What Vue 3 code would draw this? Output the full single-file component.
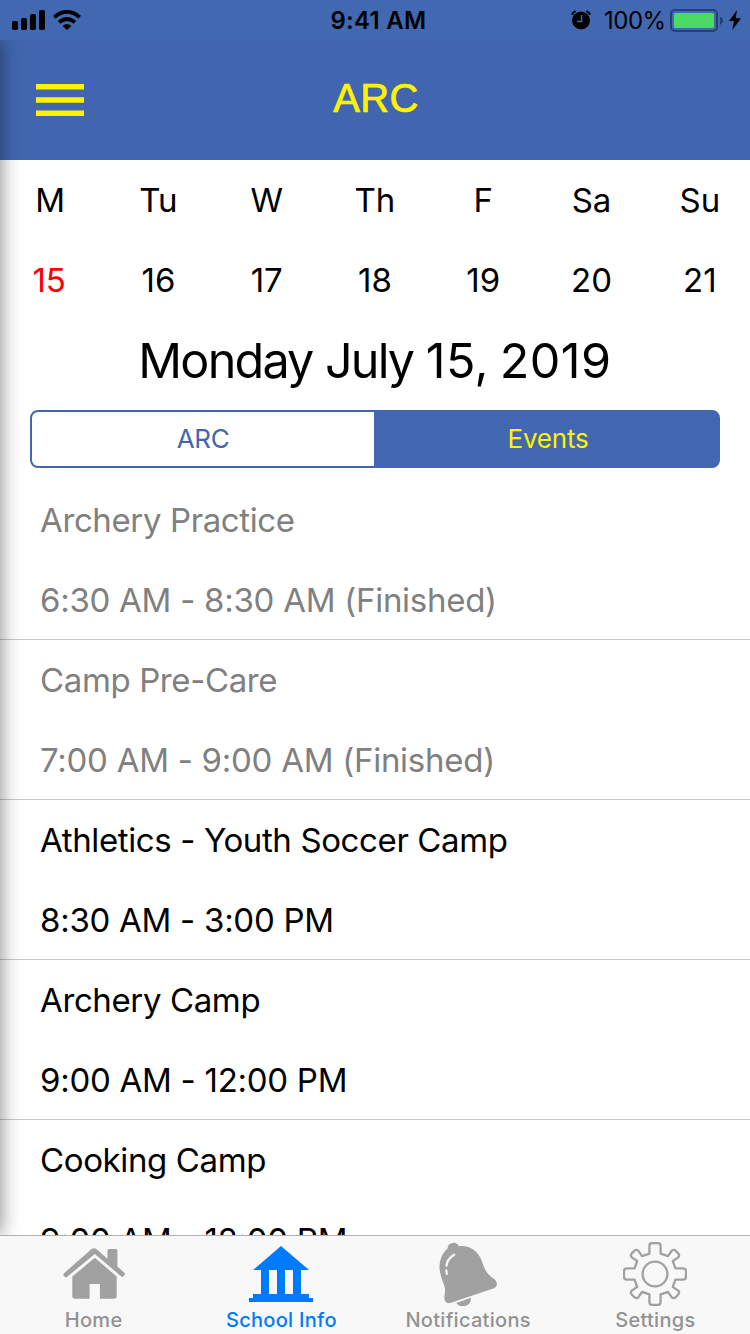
<script setup>
const days = [
  { name: 'M', date: '15', today: true },
  { name: 'Tu', date: '16' },
  { name: 'W', date: '17' },
  { name: 'Th', date: '18' },
  { name: 'F', date: '19' },
  { name: 'Sa', date: '20' },
  { name: 'Su', date: '21' },
]

const events = [
  { title: 'Archery Practice', time: '6:30 AM - 8:30 AM (Finished)', done: true },
  { title: 'Camp Pre-Care', time: '7:00 AM - 9:00 AM (Finished)', done: true },
  { title: 'Athletics - Youth Soccer Camp', time: '8:30 AM - 3:00 PM' },
  { title: 'Archery Camp', time: '9:00 AM - 12:00 PM' },
  { title: 'Cooking Camp', time: '9:00 AM - 12:00 PM' },
]
</script>

<template>
  <div class="screen">
    <header class="status">
      <div class="side">
        <svg class="signal" width="34" height="20" viewBox="0 0 34 20">
          <rect x="0" y="11" width="6" height="9" rx="1.8" />
          <rect x="9" y="8" width="6" height="12" rx="1.8" />
          <rect x="18" y="4" width="6" height="16" rx="1.8" />
          <rect x="27" y="0" width="6" height="20" rx="1.8" />
        </svg>
        <svg class="wifi" width="28" height="20" viewBox="0 0 28 20">
          <path d="M1.3 7.2Q14 -3.6 26.7 7.2M6 12.4Q14 5.6 22 12.4" fill="none" stroke="#000" stroke-width="3.8" />
          <path d="M9.6 16Q14 12 18.4 16L14 20Z" />
        </svg>
      </div>
      <div class="clock">9:41 AM</div>
      <div class="side right">
        <svg class="alarm" width="20" height="20" viewBox="0 0 20 20">
          <circle cx="10" cy="10.5" r="9" />
          <path d="M.8 4.6A10 10 0 0 1 4.6 1.1M15.4 1.1A10 10 0 0 1 19.2 4.6" fill="none" stroke="#000" stroke-width="2" />
          <path d="M10.6 5V11.4H6" fill="none" stroke="#4267b0" stroke-width="1.5" />
        </svg>
        <span class="percent">100%</span>
        <svg class="battery" width="53" height="24" viewBox="0 0 53 24">
          <rect x="1" y="1" width="46" height="21" rx="4" fill="none" stroke="#263f6e" stroke-width="2" />
          <rect x="4" y="4" width="40" height="15" rx="1.5" fill="#4cd964" />
          <path d="M50 8Q53 9 53 11.8T50 16Z" fill="#263f6e" />
        </svg>
        <svg class="bolt" width="12" height="20" viewBox="0 0 12 20">
          <path d="M8 0L0 11H5L3.3 20L12 8.3H6.7Z" />
        </svg>
      </div>
    </header>

    <main class="body">
      <nav class="navbar">
        <svg class="menu" width="48" height="32" viewBox="0 0 48 32">
          <path d="M0 0H48V5.5H0ZM0 13.3H48V18.7H0ZM0 26.5H48V32H0Z" fill="#fff200" />
        </svg>
        <h1>ARC</h1>
      </nav>

      <section class="week">
        <div v-for="d in days" :key="d.name" class="day" :class="{ today: d.today }">
          <span>{{ d.name }}</span>
          <span class="num">{{ d.date }}</span>
        </div>
      </section>

      <h2>Monday July <span class="digits">15, 2019</span></h2>

      <div class="segments">
        <button>ARC</button>
        <button class="on">Events</button>
      </div>

      <ul class="events">
        <li v-for="e in events" :key="e.title" :class="{ done: e.done }">
          <p>{{ e.title }}</p>
          <p class="time">{{ e.time }}</p>
        </li>
      </ul>
      <div class="edge"></div>
    </main>

    <footer class="tabs">
      <div class="tab">
        <svg width="64" height="64" viewBox="0 0 64 64" fill="#a1a1a1">
          <path d="M2.1 31.2L29.3 7.3Q32 5.3 34.7 7.3L45.4 16.8V8.6Q45.4 7 47 7H53.8Q55.4 7 55.4 8.6V24.6L62 30.5Q63.6 31.8 62.4 33.2L61.5 34.3Q60.4 35.5 59.1 34.3L32.8 12.1L4.9 35Q3.7 36 2.7 34.8L1.6 33.5Q.9 32.2 2.1 31.2Z" />
          <path d="M10.3 34.6L32.8 15.8L54.7 34.4V54Q54.7 56.8 52 56.8H37.9V42H27.6V56.8H13Q10.3 56.8 10.3 54Z" />
        </svg>
        <span>Home</span>
      </div>
      <div class="tab active">
        <svg width="64" height="64" viewBox="0 0 64 64" fill="#007aff">
          <path d="M32 4L60 28H52V52H60V56H64V60H0V56H4V52H12V28H4ZM20 28V52H28V28ZM36 28V52H44V28Z" fill-rule="evenodd" />
        </svg>
        <span>School Info</span>
      </div>
      <div class="tab">
        <svg width="64" height="64" viewBox="0 0 64 64" fill="#a1a1a1">
          <path d="M11.6 6.5A5.9 5.9 0 0 1 22.9 4.3C33 2.8 42 9 45.6 18.5C47.7 24 48.9 29.5 54.5 34.2L58.8 37.5C62.3 41 61.2 44.8 58 46.3L14.2 60.9C10.8 61.8 8 58.9 8.3 55.2C8.7 51.5 9.8 48.4 8.3 43.7C6 36.8 3.6 31.5 3.5 25.4C3.6 17.3 6.5 10.6 11.6 6.5Z" />
          <path d="M20.2 60.9L34.8 55.8C36 63.3 26 67.8 20.2 60.9Z" />
          <path d="M18.2 12.7Q11.5 16.3 10.5 23.7M10.4 28.3L10.8 31.8" fill="none" stroke="#f8f8f8" stroke-width="2.2" stroke-linecap="round" />
        </svg>
        <span>Notifications</span>
      </div>
      <div class="tab last">
        <svg width="64" height="64" viewBox="-32 -32 64 64" fill="none" stroke="#a1a1a1" stroke-width="2.3" stroke-linejoin="round">
          <circle r="12.4" />
          <path d="M-5.6-20.4V-28Q-5.6-31-2.6-31H2.6Q5.6-31 5.6-28V-20.4L13-17.8L16.4-22.9Q18.4-25.2 20.6-23.2L23.2-20.6Q25.2-18.4 22.9-16.4L17.8-13L20.4-5.6H28Q31-5.6 31-2.6V2.6Q31 5.6 28 5.6H20.4L17.8 13L22.9 16.4Q25.2 18.4 23.2 20.6L20.6 23.2Q18.4 25.2 16.4 22.9L13 17.8L5.6 20.4V28Q5.6 31 2.6 31H-2.6Q-5.6 31-5.6 28V20.4L-13 17.8L-16.4 22.9Q-18.4 25.2-20.6 23.2L-23.2 20.6Q-25.2 18.4-22.9 16.4L-17.8 13L-20.4 5.6H-28Q-31 5.6-31 2.6V-2.6Q-31-5.6-28-5.6H-20.4L-17.8-13L-22.9-16.4Q-25.2-18.4-23.2-20.6L-20.6-23.2Q-18.4-25.2-16.4-22.9L-13-17.8Z" />
        </svg>
        <span>Settings</span>
      </div>
    </footer>
  </div>
</template>

<style>
body {
  margin: 0;
}
</style>

<style scoped>
.screen {
  width: 750px;
  height: 1334px;
  display: flex;
  flex-direction: column;
  overflow: hidden;
  background: #fff;
  color: #000;
  font-family: Inter, "Liberation Sans", sans-serif;
}
svg {
  display: block;
  flex: none;
}
.status {
  height: 40px;
  flex: none;
  display: flex;
  align-items: center;
  background: #4268b1;
}
.side {
  flex: 1;
  display: flex;
  align-items: center;
}
.signal {
  margin-left: 12px;
}
.wifi {
  margin-left: 7px;
}
.clock {
  font-size: 24px;
  line-height: 38px;
  font-weight: 600;
  letter-spacing: 0.3px;
  padding: 2px 0 0 7px;
}
.right {
  justify-content: flex-end;
}
.percent {
  width: 62px;
  margin-left: 13px;
  font-size: 24px;
  letter-spacing: -0.5px;
  white-space: nowrap;
}
.battery {
  margin: 1px 0 0 4px;
}
.bolt {
  margin: 0 9px 0 6px;
}
.body {
  position: relative;
  flex: 1;
  min-height: 0;
  overflow: hidden;
}
.edge {
  position: absolute;
  left: -20px;
  top: 0;
  bottom: 0;
  width: 20px;
  box-shadow: 0 0 20px rgba(0, 0, 0, 0.5);
}
.navbar {
  height: 120px;
  display: grid;
  grid-template-columns: 1fr auto 1fr;
  align-items: center;
  background: #4166af;
}
.menu {
  margin-left: 36px;
}
h1 {
  margin: 0;
  font: 400 40px/46px "Liberation Sans", sans-serif;
  -webkit-text-stroke: 0.7px #fff200;
  letter-spacing: 0.4px;
  color: #fff200;
  padding: 0 0 5px 2px;
}
.week {
  display: flex;
  height: 160px;
  margin: 0 -4px;
}
.day {
  flex: 1;
  display: flex;
  flex-direction: column;
  align-items: center;
  font-size: 33px;
  line-height: 80px;
}
.today .num {
  color: #f00;
  margin-right: 2px;
}
h2 {
  margin: 0;
  height: 90px;
  font-size: 48.5px;
  line-height: 82px;
  font-weight: 400;
  text-align: center;
  letter-spacing: -1.8px;
  word-spacing: 0.5px;
}
.digits {
  letter-spacing: 0.5px;
  word-spacing: -3.5px;
}
.segments {
  display: grid;
  grid-template-columns: 342px 1fr;
  box-sizing: border-box;
  height: 58px;
  margin: 0 30px;
  border: 2px solid #4267b0;
  border-radius: 8px;
  background: #4267b0;
}
button {
  padding: 0;
  border: 0;
  border-radius: 6px 0 0 6px;
  background: #fff;
  color: #4267b0;
  font: 400 26px/54px Inter, sans-serif;
  letter-spacing: -0.4px;
}
.on {
  padding-left: 4px;
  border-radius: 0;
  background: none;
  color: #fff200;
  letter-spacing: -0.2px;
}
.events {
  margin: 12px 0 0;
  padding: 0;
  list-style: none;
}
li {
  box-sizing: border-box;
  height: 160px;
  padding-left: 40px;
  border-bottom: 1px solid #c8c7cc;
}
li p {
  margin: 0;
  font-size: 33px;
  line-height: 80px;
  letter-spacing: -0.38px;
  white-space: nowrap;
}
li .time {
  letter-spacing: -0.27px;
}
.done {
  color: #808080;
}
.tabs {
  flex: none;
  box-sizing: border-box;
  height: 99px;
  display: flex;
  border-top: 1px solid #b2b2b2;
  background: #f8f8f8;
}
.tab {
  flex: 1;
  display: flex;
  flex-direction: column;
  align-items: center;
  padding-top: 6px;
  color: #929292;
  font-size: 20px;
  font-weight: 500;
  line-height: 28px;
  letter-spacing: 0.3px;
}
.active span {
  padding-left: 1px;
}
.last {
  padding-right: 1px;
}
.active {
  color: #007aff;
}
</style>
